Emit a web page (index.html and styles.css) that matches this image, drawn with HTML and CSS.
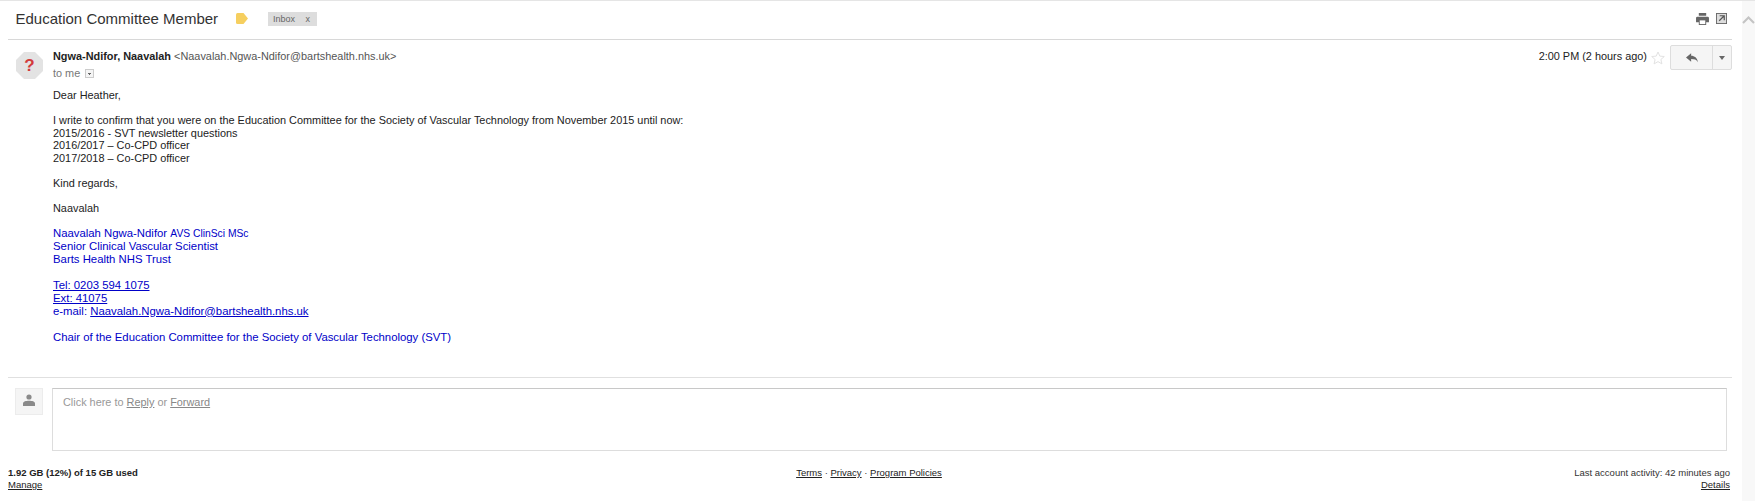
FILE: index.html
```html
<!DOCTYPE html>
<html lang="en">
<head>
<meta charset="utf-8">
<title>Education Committee Member</title>
<link rel="stylesheet" href="styles.css">
</head>
<body>
<div class="app">
  <main class="main">
    <header class="subject">
      <h1 class="subject-title">Education Committee Member</h1>
      <svg class="label-icon" width="12" height="11" viewBox="0 0 12 11"><path d="M1.5 0H7.5L12 5.5 7.5 11H1.5Q0 11 0 9.5V1.5Q0 0 1.5 0Z" fill="#f6cf5f"/></svg>
      <span class="chip"><span>Inbox</span><span class="chip-x">x</span></span>
      <span class="subject-tools">
        <svg width="13" height="12" viewBox="0 0 14 13"><path d="M3 0H11V3H3ZM1.5 4H12.500Q14 4 14 5.500V10H11V13H3V10H0V5.500Q0 4 1.500 4Z" fill="#666"/><rect x="4" y="8" width="6" height="4" fill="#fff"/></svg>
        <svg width="11" height="11" viewBox="0 0 12 12"><rect x="0.500" y="0.500" width="11" height="11" fill="#ddd" stroke="#666"/><path d="M4 3H9V8M9 3L3.500 8.500" fill="none" stroke="#555" stroke-width="1.300"/></svg>
      </span>
    </header>
    <article class="message">
      <div class="avatar-col">
        <svg class="avatar" width="27" height="27" viewBox="0 0 27 27"><path d="M8 0H19L27 8V19L19 27H8L0 19V8Z" fill="#e3e3e3"/><text x="13.500" y="19" text-anchor="middle" class="avatar-mark">?</text></svg>
      </div>
      <div class="message-main">
        <div class="meta">
          <div>
            <div class="sender"><b>Ngwa-Ndifor, Naavalah</b> <span class="address">&lt;Naavalah.Ngwa-Ndifor@bartshealth.nhs.uk&gt;</span></div>
            <div class="to">to me <span class="to-arrow"></span></div>
          </div>
          <div class="meta-right">
            <span class="time">2:00 PM (2 hours ago)</span>
            <svg class="star" width="14" height="14" viewBox="0 0 14 14"><path d="M7 1L8.800 5.100 13.300 5.500 9.900 8.500 10.900 12.900 7 10.600 3.100 12.900 4.100 8.500 0.700 5.500 5.200 5.100Z" fill="none" stroke="#e2e2e2"/></svg>
            <span class="reply-btn">
              <span class="reply-main"><svg width="12" height="10" viewBox="0 0 14 11"><path d="M6 0V3C10 3 13 5.500 14 10.500 12 7.500 10 6.800 6 6.800V10L0 5Z" fill="#666"/></svg></span>
              <span class="reply-more"></span>
            </span>
          </div>
        </div>
        <div class="body-text">
          <p>Dear Heather,</p>
          <p>I write to confirm that you were on the Education Committee for the Society of Vascular Technology from November 2015 until now:<br>2015/2016 - SVT newsletter questions<br>2016/2017 – Co-CPD officer<br>2017/2018 – Co-CPD officer</p>
          <p>Kind regards,</p>
          <p>Naavalah</p>
          <div class="signature">
            <p>Naavalah Ngwa-Ndifor <span class="small">AVS ClinSci MSc</span><br>Senior Clinical Vascular Scientist<br>Barts Health NHS Trust</p>
            <p><a class="sig-link" href="#">Tel: 0203 594 1075</a><br><a class="sig-link" href="#">Ext: 41075</a><br>e-mail: <a class="sig-link" href="#">Naavalah.Ngwa-Ndifor@bartshealth.nhs.uk</a></p>
            <p>Chair of the Education Committee for the Society of Vascular Technology (SVT)</p>
          </div>
        </div>
      </div>
    </article>
    <section class="reply">
      <div class="reply-avatar"><svg width="12" height="12" viewBox="0 0 12 12"><circle cx="6" cy="3" r="2.600" fill="#8a8a8a"/><path d="M0 12V9.500C0 7.500 3 6.800 6 6.800S12 7.500 12 9.500V12Z" fill="#8a8a8a"/></svg></div>
      <div class="reply-box">Click here to <a href="#">Reply</a> or <a href="#">Forward</a></div>
    </section>
    <footer class="footer">
      <div class="foot-left"><b>1.92 GB (12%) of 15 GB used</b><br><a href="#">Manage</a></div>
      <div class="foot-center"><a href="#">Terms</a> · <a href="#">Privacy</a> · <a href="#">Program Policies</a></div>
      <div class="foot-right">Last account activity: 42 minutes ago<br><a href="#">Details</a></div>
    </footer>
  </main>
  <aside class="rail"><svg width="13" height="8" viewBox="0 0 13 8"><path d="M1 7L6.500 1.500 12 7" fill="none" stroke="#c4c4c4" stroke-width="2"/></svg></aside>
</div>
</body>
</html>
```
FILE: styles.css
```css
* { box-sizing: border-box; }
html, body { margin: 0; height: 100%; background: #fff; }
body { font-family: "Liberation Sans", Arial, sans-serif; font-size: 10.9px; color: #222; overflow: hidden; }
.app { display: flex; height: 501px; border-top: 1px solid #e5e5e5; }
.main { width: 1742px; padding: 0 10px 0 8px; }
.rail { width: 13px; background: #f8f8f8; display: flex; justify-content: center; padding-top: 15px; align-items: flex-start; }

.subject { height: 39px; border-bottom: 1px solid #d8d8d8; display: flex; align-items: center; padding: 0 0 3px 7.500px; }
.subject-title { margin: 0; font-size: 15px; font-weight: 400; color: #333; line-height: 22px; }
.label-icon { margin-left: 18px; }
.chip { margin-left: 20px; width: 49px; height: 14px; background: #ddd; color: #666; font-size: 9px; line-height: 14px; display: flex; justify-content: space-between; padding: 0 5px; }
.chip-x { padding-right: 2px; }
.subject-tools { margin-left: auto; display: flex; align-items: center; gap: 7px; padding-right: 5px; }

.message { display: flex; padding: 11px 0 0 8px; height: 338px; border-bottom: 1px solid #e0e0e0; }
.avatar-col { width: 37px; flex: none; }
.avatar { display: block; margin-top: 1px; }
.avatar-mark { font: 700 17px "Liberation Sans", Arial, sans-serif; fill: #d23b3b; }
.message-main { flex: 1; min-width: 0; }
.meta { display: flex; justify-content: space-between; align-items: flex-start; height: 38px; }
.sender { line-height: 14px; margin-top: -2px; color: #222; }
.address { color: #555; }
.to { margin-top: 3px; color: #777; line-height: 14px; display: flex; align-items: center; gap: 5px; }
.to-arrow { width: 9px; height: 9px; border: 1px solid #ccc; background: linear-gradient(#666,#666) 2px 3px / 3px 1px no-repeat, linear-gradient(#666,#666) 3px 4px / 1px 1px no-repeat, #f5f5f5; }
.meta-right { display: flex; align-items: flex-start; }
.time { line-height: 14px; margin-top: -2px; color: #222; }
.star { margin: 0 5px 0 4px; }
.reply-btn { display: flex; width: 62px; height: 25px; margin-top: -6px; border: 1px solid #ddd; border-radius: 2px; background: #f5f5f5; }
.reply-main { flex: 1; display: flex; align-items: center; justify-content: center; border-right: 1px solid #ddd; }
.reply-more { width: 18px; position: relative; }
.reply-more::after { content: ""; position: absolute; left: 6px; top: 10px; border: 3px solid transparent; border-top: 4px solid #666; border-bottom: 0; }

.body-text { line-height: 12.8px; color: #222; }
.body-text p { margin: 0 0 12px; }
.signature { color: #0000c8; font-size: 11.350px; line-height: 13px; }
.signature p { margin-bottom: 13px; }
.sig-link { color: #0000c8; text-decoration: underline; }
.small { font-size: 10.3px; }

.reply { display: flex; gap: 9px; padding: 10px 0 0 7px; }
.reply-avatar { width: 28px; height: 27px; background: #f5f5f5; border: 1px solid #ececec; display: flex; align-items: center; justify-content: center; padding-bottom: 3px; }
.reply-box { flex: 1; height: 63px; border: 1px solid #ccc; border-color: #c8c8c8 #ddd #ddd #ddd; padding: 6px 10px; color: #999; line-height: 14px; margin-right: 5px; }
.reply-box a { color: #888; }

.footer { display: flex; justify-content: space-between; margin-top: 16px; font-size: 9.500px; line-height: 12px; color: #333; }
.footer > div { flex: 1; }
.footer a { color: #222; }
.foot-left b { color: #222; }
.foot-center { text-align: center; }
.foot-right { text-align: right; padding-right: 2px; }
```
